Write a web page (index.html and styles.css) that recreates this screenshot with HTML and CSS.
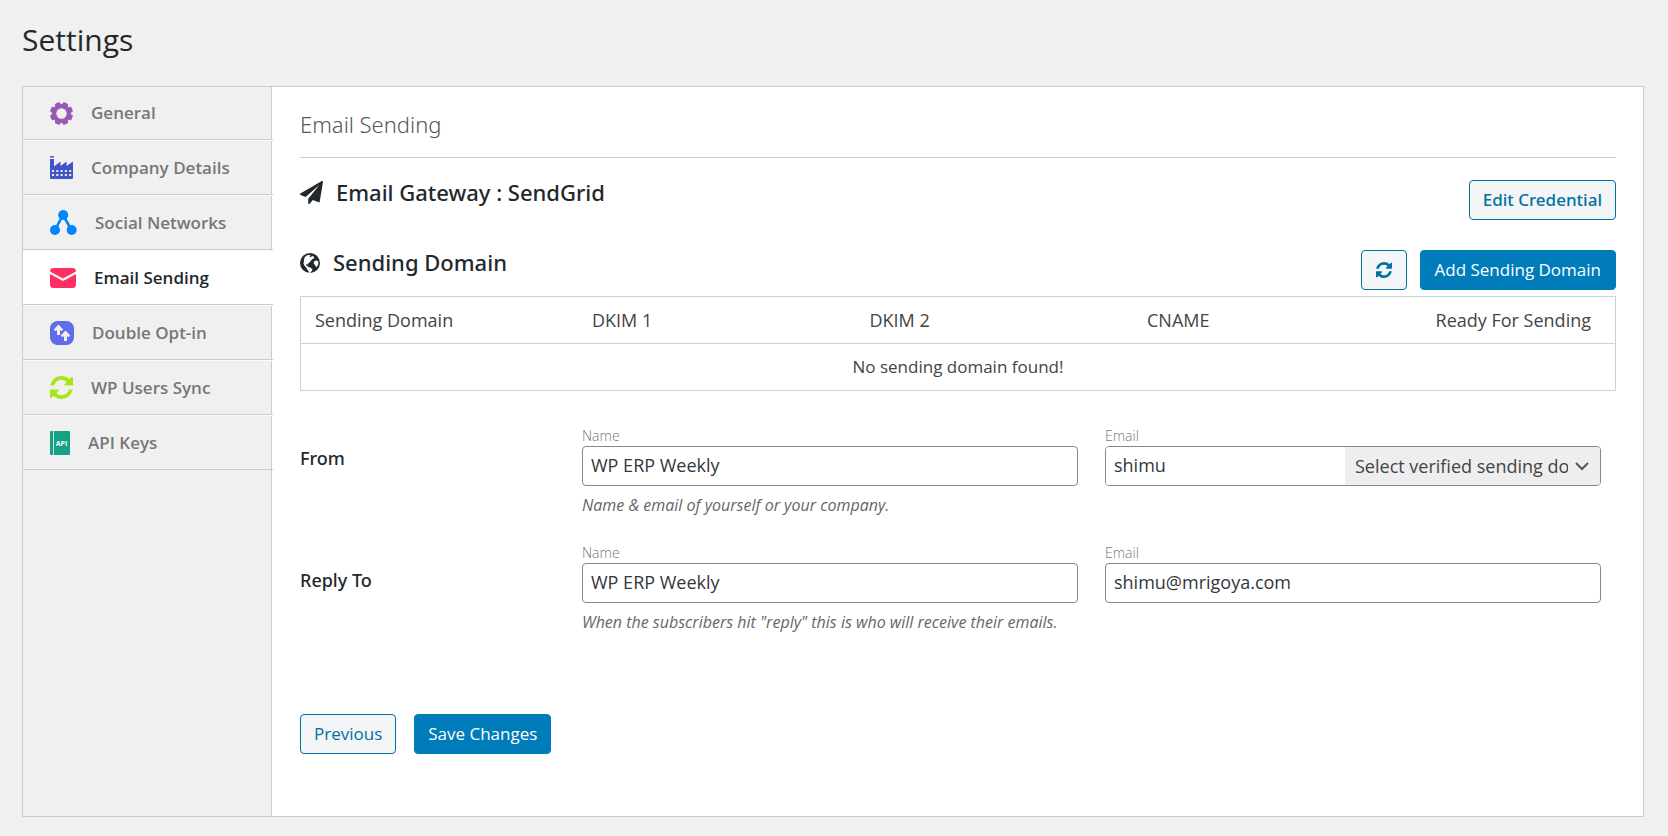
FILE: index.html
```html
<!DOCTYPE html>
<html lang="en">
<head>
<meta charset="utf-8">
<title>Settings</title>
<link rel="stylesheet" href="styles.css">
</head>
<body>
<h1 class="page-title">Settings</h1>
<div class="panel">
  <nav class="side-nav" aria-label="Settings sections">
    <a class="nav-item" href="#general">
      <svg class="nav-icon" width="23" height="23" viewBox="0 0 24 24" aria-hidden="true"><g fill="#9b59b6"><circle cx="12" cy="12" r="10"/><rect x="9" y="0" width="6" height="24" rx="1.6" transform="rotate(22.5 12 12)"/><rect x="9" y="0" width="6" height="24" rx="1.6" transform="rotate(67.5 12 12)"/><rect x="9" y="0" width="6" height="24" rx="1.6" transform="rotate(112.5 12 12)"/><rect x="9" y="0" width="6" height="24" rx="1.6" transform="rotate(157.5 12 12)"/></g><circle cx="12" cy="12" r="5.4" fill="#f0f0f0"/></svg>
      <span>General</span>
    </a>
    <a class="nav-item" href="#company">
      <svg class="nav-icon" width="23" height="23" viewBox="0 0 23 23" aria-hidden="true"><path fill="#4353c9" d="M0 1.600V.4Q0 0 .5 0h3q.5 0 .5.4V1.600zM0 3h4v7.500L10.500 5.500v4.500L16.500 5.500v4.500L23 5.500V22q0 1-1 1H1q-1 0-1-1z"/><g fill="#f0f0f0"><path d="M2 14h2v2H2zm4.300 0h2v2h-2zm4.300 0h2v2h-2zm4.300 0h2v2h-2zm4.300 0h2v2h-2zM2 18h2v2H2zm4.300 0h2v2h-2zm4.300 0h2v2h-2zm4.300 0h2v2h-2zm4.300 0h2v2h-2z"/></g></svg>
      <span>Company Details</span>
    </a>
    <a class="nav-item" href="#social">
      <svg class="nav-icon" width="27" height="25" viewBox="0 0 27 25" aria-hidden="true"><path d="M5 20L13 5l8.500 15" fill="none" stroke="#0085ff" stroke-width="2.600"/><g fill="#0085ff"><circle cx="13.200" cy="5" r="5"/><circle cx="5" cy="20" r="5"/><circle cx="21.700" cy="20" r="5"/></g></svg>
      <span>Social Networks</span>
    </a>
    <a class="nav-item nav-item-active" href="#email" aria-current="page">
      <svg class="nav-icon nav-icon-low" width="26" height="20" viewBox="0 0 26 20" aria-hidden="true"><path fill="#ff2e63" d="M0 3.500Q0 0 3.500 0h19Q26 0 26 3.500L13.500 10.300q-.5.300-1 0zM0 6l12 6.500q1 .5 2 0L26 6v10.500q0 3.500-3.500 3.500h-19Q0 20 0 16.500z"/></svg>
      <span>Email Sending</span>
    </a>
    <a class="nav-item" href="#optin">
      <svg class="nav-icon" width="24" height="24" viewBox="0 0 24 24" aria-hidden="true"><rect width="24" height="24" rx="7.500" fill="#5f6ee8"/><path fill="#f0f0f0" d="M8.500 3.600l4.800 5-1.800 1.700-1.500-1.400V14H7V8.900l-1.500 1.400-1.800-1.700zM15.500 9.600l4.800 5-1.800 1.700-1.500-1.400V20h-3v-5.100l-1.500 1.400-1.800-1.700z"/></svg>
      <span>Double Opt-in</span>
    </a>
    <a class="nav-item" href="#sync">
      <svg class="nav-icon" width="23" height="23" viewBox="0 0 1536 1536" aria-hidden="true"><path fill="#a4e816" d="M1511 928q0 5-1 7-64 268-268 434.500t-478 166.500q-146 0-282.500-55t-243.500-157l-129 129q-19 19-45 19t-45-19-19-45v-448q0-26 19-45t45-19h448q26 0 45 19t19 45-19 45l-137 137q71 66 161 102t187 36q134 0 250-65t186-179q11-17 53-117 8-23 30-23h192q13 0 22.500 9.500t9.500 22.500zm25-800v448q0 26-19 45t-45 19h-448q-26 0-45-19t-19-45 19-45l138-138q-148-137-349-137-134 0-250 65t-186 179q-11 17-53 117-8 23-30 23h-199q-13 0-22.500-9.500t-9.500-22.500v-7q65-268 270-434.500t480-166.500q146 0 284 55.500t245 156.500l130-129q19-19 45-19t45 19 19 45z"/></svg>
      <span>WP Users Sync</span>
    </a>
    <a class="nav-item" href="#api">
      <svg class="nav-icon" width="20" height="24" viewBox="0 0 20 24" aria-hidden="true"><rect width="20" height="24" rx="1" fill="#16a085"/><path d="M3.500 0v24" stroke="#c5e5de" stroke-width="1"/><text x="11.500" y="14.500" class="api-text">API</text></svg>
      <span>API Keys</span>
    </a>
  </nav>
  <main class="content">
    <h2 class="section-title">Email Sending</h2>
    <section class="block-head gateway">
      <h3 class="block-title"><svg width="23" height="23" viewBox="0 0 1792 1792" aria-hidden="true"><path fill="currentColor" d="M1764 11q33 24 27 64l-256 1536q-5 29-32 45-14 8-31 8-11 0-24-5l-453-185-242 295q-18 23-49 23-13 0-22-4-19-7-30.500-23.500t-11.500-36.500v-349l864-1059-1069 925-395-162q-37-14-40-55-2-40 32-59l1664-960q15-9 32-9 20 0 36 11z"/></svg>Email Gateway : SendGrid</h3>
      <button type="button" class="btn btn-outline btn-strong">Edit Credential</button>
    </section>
    <section class="block-head domain">
      <h3 class="block-title"><svg width="20" height="20" viewBox="0 0 20 20" aria-hidden="true"><circle cx="10" cy="10" r="10" fill="currentColor"/><path fill="#fff" d="M4.500 4.500L6.500 2.600l3-.9 1 .8-1 1 1.500.7 1-1.500 1.500.8 1 1.600-2 1-1.500 1.500-1 1.500-1.500 1-.5 1.500-1.500-.5-.5 1.200 1.500.8 1 .8 2.200.8 1.800 1.500-.8 1.800-1.700 2-1 .8-.2-2.200-1.500-2-1.300-2.300-1.500-1.500-1-2.300zM14 8.500l2-1 2 .5.5 2-1 3-1.300 1.200-1-2-1.500-1.700z"/></svg>Sending Domain</h3>
      <div class="actions">
        <button type="button" class="btn btn-outline" aria-label="Refresh"><svg width="16" height="16" viewBox="0 0 1536 1536" aria-hidden="true"><path fill="currentColor" d="M1511 928q0 5-1 7-64 268-268 434.500t-478 166.500q-146 0-282.500-55t-243.500-157l-129 129q-19 19-45 19t-45-19-19-45v-448q0-26 19-45t45-19h448q26 0 45 19t19 45-19 45l-137 137q71 66 161 102t187 36q134 0 250-65t186-179q11-17 53-117 8-23 30-23h192q13 0 22.500 9.500t9.500 22.500zm25-800v448q0 26-19 45t-45 19h-448q-26 0-45-19t-19-45 19-45l138-138q-148-137-349-137-134 0-250 65t-186 179q-11 17-53 117-8 23-30 23h-199q-13 0-22.500-9.500t-9.500-22.500v-7q65-268 270-434.500t480-166.500q146 0 284 55.500t245 156.500l130-129q19-19 45-19t45 19 19 45z"/></svg></button>
        <button type="button" class="btn btn-primary">Add Sending Domain</button>
      </div>
    </section>
    <table class="domains">
      <thead><tr><th>Sending Domain</th><th>DKIM 1</th><th>DKIM 2</th><th>CNAME</th><th class="ready">Ready For Sending</th></tr></thead>
      <tbody><tr><td colspan="5">No sending domain found!</td></tr></tbody>
    </table>
    <form class="form">
      <div class="form-row" role="group" aria-labelledby="from-label">
        <div class="row-label" id="from-label">From</div>
        <div class="field">
          <label for="from-name">Name</label>
          <input id="from-name" type="text" value="WP ERP Weekly">
          <p class="hint">Name &amp; email of yourself or your company.</p>
        </div>
        <div class="field">
          <label for="from-email">Email</label>
          <div class="combo">
            <input id="from-email" type="text" value="shimu">
            <div class="select-wrap">
              <select aria-label="Sending domain"><option>Select verified sending domain</option></select>
              <svg class="chevron" width="14" height="9" viewBox="0 0 14 9" aria-hidden="true"><path d="M1 1l6 6 6-6" fill="none" stroke="#555" stroke-width="2"/></svg>
            </div>
          </div>
        </div>
      </div>
      <div class="form-row" role="group" aria-labelledby="reply-label">
        <div class="row-label row-label-low" id="reply-label">Reply To</div>
        <div class="field">
          <label for="reply-name">Name</label>
          <input id="reply-name" type="text" value="WP ERP Weekly">
          <p class="hint">When the subscribers hit "reply" this is who will receive their emails.</p>
        </div>
        <div class="field">
          <label for="reply-email">Email</label>
          <input id="reply-email" type="text" value="shimu@mrigoya.com">
        </div>
      </div>
      <div class="form-actions">
        <button type="button" class="btn btn-outline">Previous</button>
        <button type="submit" class="btn btn-primary">Save Changes</button>
      </div>
    </form>
  </main>
</div>
</body>
</html>
```
FILE: styles.css
```css
* { box-sizing: border-box; }
body {
  margin: 0;
  padding: 20px 24px 19px 22px;
  background: #f0f0f0;
  color: #23282d;
  font-family: "Open Sans", "Noto Sans", sans-serif;
  font-size: 17px;
  line-height: 24px;
}
h1, h2, h3, p { margin: 0; }
button, input, select { font: inherit; }
.page-title { font-size: 30px; line-height: 40px; font-weight: 400; margin-bottom: 26px; }
.panel {
  display: grid;
  grid-template-columns: 250px 1fr;
  background: #fff;
  border: 1px solid #ccc;
}
.side-nav {
  display: flex;
  flex-direction: column;
  background: linear-gradient(90deg, #f0f0f0 248px, #ccc 248px, #ccc 249px, #fff 249px);
}
.nav-item {
  display: flex;
  align-items: center;
  gap: 18px;
  height: 55px;
  padding-left: 27px;
  border-top: 1px solid #fafafa;
  border-bottom: 1px solid #ccc;
  color: #777;
  font-weight: 600;
  text-decoration: none;
}
.nav-item:first-child { height: 53px; border-top: 0; }
.nav-item-active { background: #fff; color: #23282d; }
.api-text { font: 700 7px "Open Sans", sans-serif; fill: #fff; text-anchor: middle; }
.content { padding: 21px 27px 62px 27px; }
.section-title {
  font-size: 22px;
  line-height: 32px;
  font-family: "Noto Sans", "Open Sans", sans-serif;
  font-weight: 300;
  color: #555;
  padding-bottom: 17px;
  border-bottom: 1px solid #ccc;
}
.block-head { display: flex; justify-content: space-between; align-items: flex-start; }
.gateway { padding-top: 22px; }
.domain { padding-top: 30px; }
.block-title {
  display: flex;
  align-items: center;
  gap: 13px;
  font-family: "Noto Sans", "Open Sans", sans-serif;
  font-size: 22px;
  line-height: 25px;
  font-weight: 500;
}
.actions { display: flex; gap: 13px; }
.btn {
  display: inline-flex;
  align-items: center;
  height: 40px;
  padding: 0 14px;
  border: 1px solid #0071a1;
  border-radius: 4px;
  cursor: pointer;
}
.btn-outline { background: #f3f5f6; color: #0071a1; }
.btn-primary { background: #007cba; border-color: #007cba; color: #fff; }
.btn-strong { font-family: "Noto Sans", "Open Sans", sans-serif; font-weight: 500; padding: 0 13px; }
.domains {
  width: 100%;
  margin-top: 6px;
  border: 1px solid #ccd0d4;
  border-collapse: collapse;
  table-layout: fixed;
  color: #444;
}
.domains th {
  height: 47px;
  padding: 0 14px;
  font-size: 18px;
  font-weight: 400;
  text-align: left;
  border-bottom: 1px solid #ccd0d4;
}
.domains .ready { text-align: right; padding-right: 24px; width: 205px; }
.domains td { height: 47px; padding: 0; text-align: center; }
.form { padding-top: 35px; }
.form-row {
  display: grid;
  grid-template-columns: 255px 1fr 1fr;
  column-gap: 27px;
  padding-right: 15px;
  margin-bottom: 27px;
}
.row-label { font-family: "Noto Sans", "Open Sans", sans-serif; font-size: 18px; font-weight: 500; padding-top: 20px; }
.row-label-low { padding-top: 25px; }
.field { display: flex; flex-direction: column; color: #444; }
.field label { font-size: 14px; line-height: 20px; font-weight: 300; color: #777; }
.field input {
  width: 100%;
  height: 40px;
  padding: 0 8px 2px;
  border: 1px solid #7e8993;
  border-radius: 4px;
  background: #fff;
  color: #32373c;
  font-size: 18px;
}
.hint { font-size: 16px; line-height: 22px; font-style: italic; color: #666; padding-top: 8px; }
.combo {
  display: grid;
  grid-template-columns: 1fr 255px;
  height: 40px;
  border: 1px solid #7e8993;
  border-radius: 4px;
  overflow: hidden;
}
.combo .select-wrap { position: relative; }
.combo input { height: 38px; border: 0; border-radius: 0; }
.select-wrap select {
  appearance: none;
  width: 100%;
  height: 38px;
  padding: 0 32px 0 10px;
  border: 0;
  border-radius: 0;
  background: #eee;
  color: #444;
  font-size: 18px;
}
.chevron { position: absolute; right: 11px; top: 15px; pointer-events: none; }
.form-actions { display: flex; gap: 18px; padding-top: 54px; }
.form-actions .btn { padding: 0 13px; }
```
